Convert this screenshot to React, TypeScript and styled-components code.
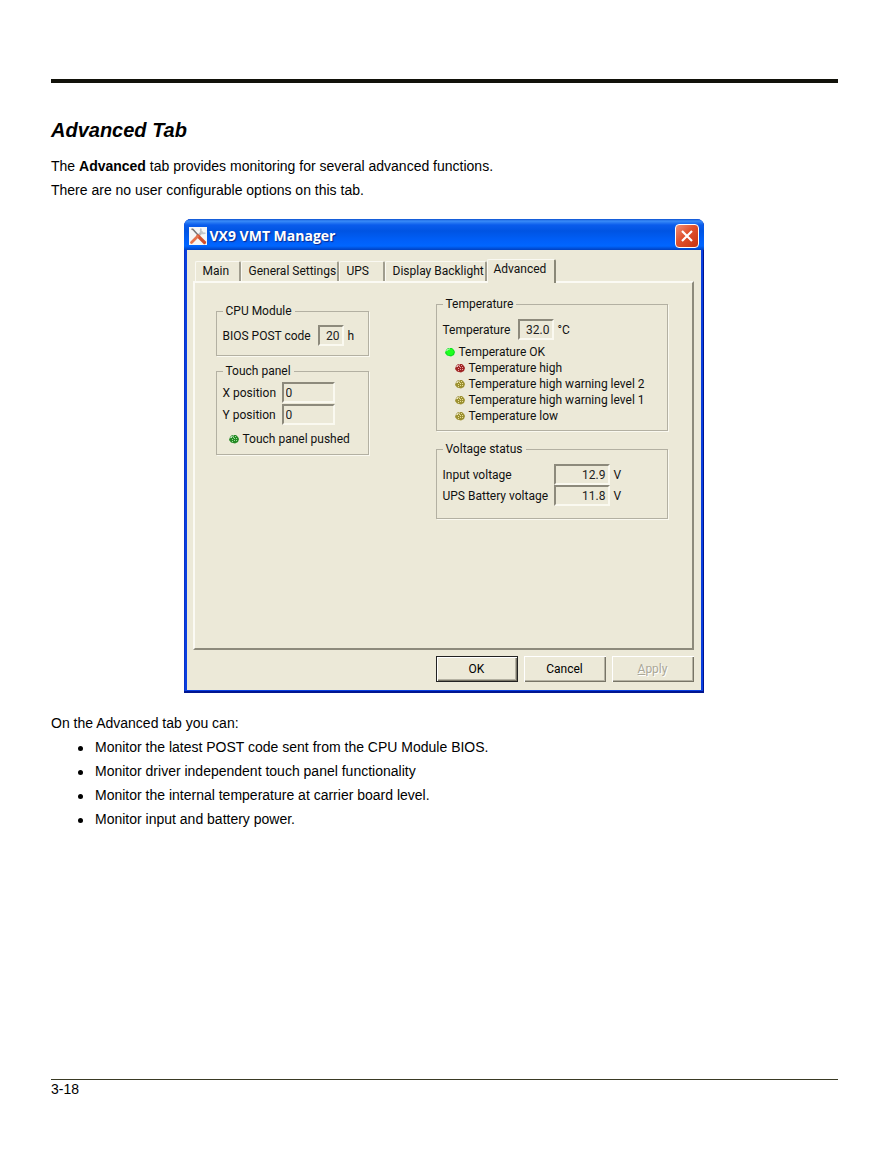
import React from "react";
import styled, { createGlobalStyle } from "styled-components";

const GlobalStyle = createGlobalStyle`
  * { box-sizing: border-box; }
  body { margin: 0; background: #fff; color: #000; }
`;

const Page = styled.main`
  display: flex;
  flex-direction: column;
  min-height: 100vh;
  padding: 79px 54px 57px 51px;
  font: 14px/24px "Liberation Sans", Arial, sans-serif;
`;
const TopRule = styled.hr`
  width: 100%;
  height: 4px;
  margin: 0 0 34px;
  border: 0;
  background: #12120a;
`;
const Heading = styled.h1`
  margin: 0 0 11px;
  font-size: 20px;
  line-height: 26px;
  font-style: italic;
`;
const Text = styled.p`
  margin: 0;
`;
const Figure = styled.figure`
  display: flex;
  justify-content: center;
  margin: 17px 0 18px;
  padding-right: 2px;
`;
const List = styled.ul`
  margin: 0;
  padding: 0;
  list-style: none;
`;
const Item = styled.li`
  display: flex;
  align-items: center;
  gap: 12px;
  padding-left: 27px;
  &::before {
    content: "";
    width: 5px;
    height: 5px;
    margin-top: 2px;
    border-radius: 50%;
    background: #000;
  }
`;
const Footer = styled.footer`
  margin-top: auto;
  border-top: 1px solid #3a3a24;
  line-height: 18px;
`;

const Window = styled.section`
  display: flex;
  flex-direction: column;
  width: 520px;
  max-width: 100%;
  padding: 0 3px 3px;
  border-radius: 7px 7px 0 0;
  background: #0a3fe0;
  box-shadow: inset -1px -2px #001590, inset 1px 0 #0a32c8;
  font: 12px/16px "Roboto", "Liberation Sans", sans-serif;
`;
const TitleBar = styled.header`
  display: flex;
  align-items: center;
  height: 31px;
  margin: 0 -3px;
  padding: 3px 5px 0 5px;
  border-radius: 7px 7px 0 0;
  background: linear-gradient(#0a4fd0 0, #3a8cf8 2px, #0a5cec 6px, #0054e3 12px, #0060fa 22px, #0066ff 27px, #0040c0 31px);
`;
const Title = styled.h2`
  flex: 1;
  margin: 0 0 0 3px;
  color: #fff;
  font: bold 14px/18px "Open Sans", sans-serif;
  text-shadow: 1px 1px 1px #0a2a90;
`;
const Close = styled.button`
  display: grid;
  place-items: center;
  width: 24px;
  height: 24px;
  padding: 0;
  border: 1px solid #fff;
  border-radius: 4px;
  background: linear-gradient(135deg, #f09078, #e0502c 45%, #c83410);
`;
const Client = styled.div`
  padding: 8px 7px 8px 6px;
  background: #ece9d8;
`;
const Tabs = styled.div`
  display: flex;
  align-items: flex-end;
  height: 23px;
  padding-left: 2px;
`;
const Tab = styled.button<{ $width: number; $active?: boolean }>`
  position: relative;
  z-index: ${(p) => (p.$active ? 1 : 0)};
  width: ${(p) => p.$width}px;
  height: ${(p) => (p.$active ? 24 : 20)}px;
  margin-bottom: ${(p) => (p.$active ? -2 : 0)}px;
  padding: ${(p) => (p.$active ? "0 0 5px 6px" : "0 0 1px 7px")};
  border: solid;
  border-width: 1px 2px 0 1px;
  border-color: #faf9f2 ${(p) => (p.$active ? "#8a8878" : "#a09d8e")} #fff #faf9f2;
  border-radius: 2px 2px 0 0;
  background: #ece9d8;
  color: #111;
  font: inherit;
  text-align: left;
  white-space: nowrap;
`;
const Panel = styled.div`
  display: flex;
  gap: 67px;
  height: 369px;
  padding: 13px 24px 0 21px;
  border: solid;
  border-width: 2px;
  border-color: #fbfaf4 #8d8a7c #8d8a7c #fbfaf4;
`;
const Column = styled.div<{ $width: number; $top: number }>`
  width: ${(p) => p.$width}px;
  padding-top: ${(p) => p.$top}px;
`;
const Group = styled.fieldset<{ $height: number; $gap: number }>`
  height: ${(p) => p.$height}px;
  margin: 0 0 ${(p) => p.$gap}px;
  padding: 0 0 0 6px;
  min-width: 0;
  border: 1px solid #b3b0a2;
  box-shadow: 1px 1px #faf9f0;
  color: #111;
`;
const Legend = styled.legend`
  padding: 0 3px;
  line-height: 16px;
`;
const Row = styled.div<{ $top?: number }>`
  display: flex;
  align-items: center;
  height: 21px;
  margin-top: ${(p) => p.$top ?? 0}px;
  white-space: nowrap;
`;
const Label = styled.label<{ $width: number }>`
  width: ${(p) => p.$width}px;
`;
const Value = styled.input<{ $width: number; $left?: boolean }>`
  width: ${(p) => p.$width}px;
  height: 21px;
  margin-right: 4px;
  padding: 0 2px;
  border: solid;
  border-width: 2px;
  border-color: #8d8a7c #faf9f0 #faf9f0 #8d8a7c;
  border-radius: 0;
  background: #ece9d8;
  color: #222;
  font: inherit;
  text-align: ${(p) => (p.$left ? "left" : "right")};
`;
const Status = styled.div<{ $indent: number; $top?: number }>`
  display: flex;
  align-items: center;
  gap: 4px;
  height: 16px;
  margin-top: ${(p) => p.$top ?? 0}px;
  padding-left: ${(p) => p.$indent}px;
  white-space: nowrap;
`;
const Buttons = styled.div`
  display: flex;
  justify-content: flex-end;
  gap: 6px;
  margin-top: 6px;
`;
const Button = styled.button<{ $default?: boolean }>`
  width: 82px;
  height: 26px;
  padding: 0;
  border: ${(p) => (p.$default ? "1px solid #222" : "0")};
  background: #ece9d8;
  box-shadow: inset 1px 1px #fff, inset -1px -1px #777466, inset -2px -2px #b5b2a3;
  color: #000;
  font: inherit;
  &:disabled {
    color: #aaa797;
    text-shadow: 1px 1px #fff;
  }
`;

const AppIcon = () => (
  <svg width="18" height="18" viewBox="0 0 18 18" aria-hidden="true">
    <rect width="18" height="18" fill="#f6f6f6" />
    <path d="M13.500 4.500 8.500 9.500" stroke="#b9bcc0" strokeWidth="2.500" />
    <path d="M12 1.500Q11 4 12.500 5.500T16.500 6" stroke="#c2c5c9" strokeWidth="1.800" fill="none" />
    <path d="m2.500 2 1.500.5 5 5.500" stroke="#777" strokeWidth="1.500" fill="none" />
    <path d="m9 9 6.500 6.500" stroke="#d2502e" strokeWidth="3.200" strokeLinecap="round" />
    <path d="m8.500 9.500-6 6" stroke="#e5734c" strokeWidth="2.800" strokeLinecap="round" />
  </svg>
);

const Led = ({ color, dark, lit }: { color: string; dark: string; lit?: boolean }) => (
  <svg width="10" height="10" viewBox="0 0 10 10" aria-hidden="true">
    <path d="M3 1h4l2 2 1 2-1 3-3 1.500-4-1L0 6l1-3Z" fill={dark} />
    {lit ? (
      <path d="M1 5 3 2h4l2 3-2 3H3Z" fill={color} />
    ) : (
      <path d="M2 3h1v1H2zM4 3h1v1H4zM6 2h1v1H6zM3 5h1v1H3zM5 4h1v1H5zM7 4h1v1H7zM5 6h1v1H5zM7 6h1v1H7zM3 7h1v1H3z" fill={color} />
    )}
    <path d="M1.500 4Q2.500 2 5 1.800" stroke="#fff" strokeWidth="1.100" fill="none" opacity=".7" />
  </svg>
);

const tabs = [
  { name: "Main", width: 46 },
  { name: "General Settings", width: 98 },
  { name: "UPS", width: 46 },
  { name: "Display Backlight", width: 102 },
  { name: "Advanced", width: 69 },
];

const alarms = [
  { name: "Temperature high", color: "#eba0a0", dark: "#a02424" },
  { name: "Temperature high warning level 2", color: "#e6de94", dark: "#9c9030" },
  { name: "Temperature high warning level 1", color: "#e6de94", dark: "#9c9030" },
  { name: "Temperature low", color: "#e6de94", dark: "#9c9030" },
];

const Dialog = () => (
  <Window aria-label="VX9 VMT Manager">
    <TitleBar>
      <AppIcon />
      <Title>VX9 VMT Manager</Title>
      <Close type="button" aria-label="Close">
        <svg width="14" height="14" viewBox="0 0 14 14">
          <path d="m2 2 10 10M12 2 2 12" stroke="#fff" strokeWidth="2.200" />
        </svg>
      </Close>
    </TitleBar>
    <Client>
      <Tabs role="tablist">
        {tabs.map((t) => (
          <Tab key={t.name} type="button" role="tab" aria-selected={t.name === "Advanced"} $width={t.width} $active={t.name === "Advanced"}>
            {t.name}
          </Tab>
        ))}
      </Tabs>
      <Panel role="tabpanel">
        <Column $width={153} $top={7}>
          <Group $height={53} $gap={7}>
            <Legend>CPU Module</Legend>
            <Row $top={6}>
              <Label $width={95} htmlFor="bios">BIOS POST code</Label>
              <Value id="bios" $width={26} readOnly defaultValue="20" />h
            </Row>
          </Group>
          <Group $height={92} $gap={0}>
            <Legend>Touch panel</Legend>
            <Row $top={3}>
              <Label $width={59} htmlFor="xpos">X position</Label>
              <Value id="xpos" $width={53} $left readOnly defaultValue="0" />
            </Row>
            <Row $top={1}>
              <Label $width={59} htmlFor="ypos">Y position</Label>
              <Value id="ypos" $width={53} $left readOnly defaultValue="0" />
            </Row>
            <Status $indent={6} $top={6}>
              <Led color="#9ce09c" dark="#258a25" />
              Touch panel pushed
            </Status>
          </Group>
        </Column>
        <Column $width={232} $top={0}>
          <Group $height={135} $gap={10}>
            <Legend>Temperature</Legend>
            <Row $top={7}>
              <Label $width={75} htmlFor="temp">Temperature</Label>
              <Value id="temp" $width={36} readOnly defaultValue="32.0" />°C
            </Row>
            <Status $indent={2} $top={4}>
              <Led color="#20ff20" dark="#10e020" lit />
              Temperature OK
            </Status>
            {alarms.map((a) => (
              <Status key={a.name} $indent={12}>
                <Led color={a.color} dark={a.dark} />
                {a.name}
              </Status>
            ))}
          </Group>
          <Group $height={78} $gap={0}>
            <Legend>Voltage status</Legend>
            <Row $top={7}>
              <Label $width={111} htmlFor="vin">Input voltage</Label>
              <Value id="vin" $width={56} readOnly defaultValue="12.9" />V
            </Row>
            <Row>
              <Label $width={111} htmlFor="vbat">UPS Battery voltage</Label>
              <Value id="vbat" $width={56} readOnly defaultValue="11.8" />V
            </Row>
          </Group>
        </Column>
      </Panel>
      <Buttons>
        <Button type="button" $default>OK</Button>
        <Button type="button">Cancel</Button>
        <Button type="button" disabled><u>A</u>pply</Button>
      </Buttons>
    </Client>
  </Window>
);

export default function App() {
  return (
    <>
      <GlobalStyle />
      <Page>
        <TopRule />
        <Heading>Advanced Tab</Heading>
        <Text>The <b>Advanced</b> tab provides monitoring for several advanced functions.</Text>
        <Text>There are no user configurable options on this tab.</Text>
        <Figure>
          <Dialog />
        </Figure>
        <Text>On the Advanced tab you can:</Text>
        <List>
          <Item>Monitor the latest POST code sent from the CPU Module BIOS.</Item>
          <Item>Monitor driver independent touch panel functionality</Item>
          <Item>Monitor the internal temperature at carrier board level.</Item>
          <Item>Monitor input and battery power.</Item>
        </List>
        <Footer>3-18</Footer>
      </Page>
    </>
  );
}
